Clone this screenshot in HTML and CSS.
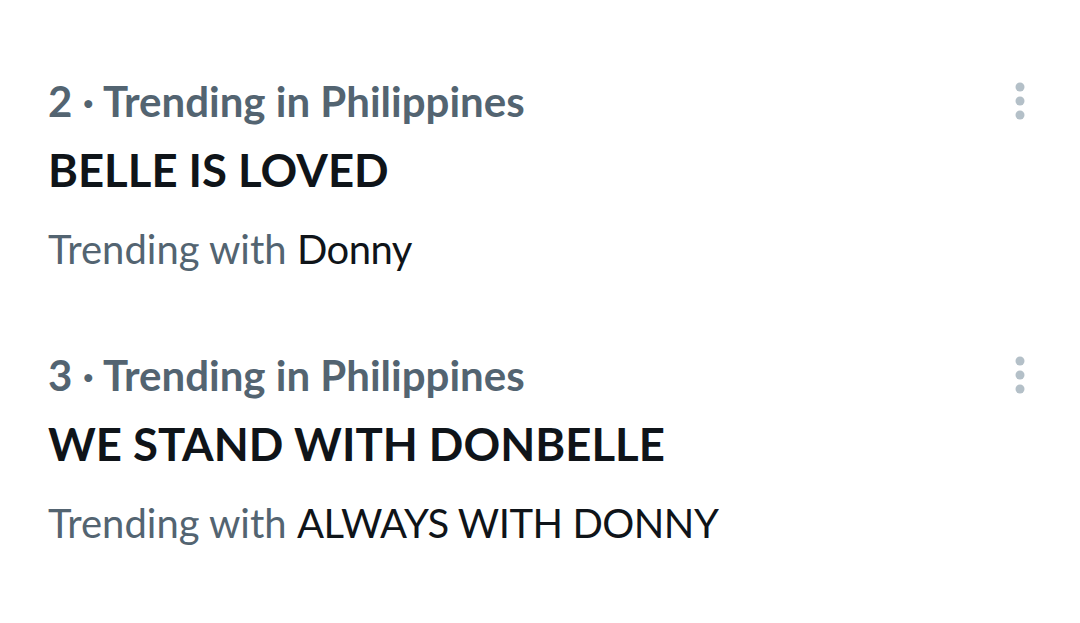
FILE: index.html
```html
<!DOCTYPE html>
<html>
<head>
<meta charset="utf-8">
<link rel="stylesheet" href="styles.css">
</head>
<body>
<div class="list">
  <div class="trend">
    <div class="info">
      <div class="meta">2 · Trending in Philippines</div>
      <div class="title">BELLE IS LOVED</div>
      <div class="with">Trending with <span class="dark">Donny</span></div>
    </div>
    <div class="more">
      <svg width="12" height="40" viewBox="0 0 12 40"><circle cx="6" cy="6" r="4.5"/><circle cx="6" cy="20" r="4.5"/><circle cx="6" cy="34" r="4.5"/></svg>
    </div>
  </div>
  <div class="trend">
    <div class="info">
      <div class="meta">3 · Trending in Philippines</div>
      <div class="title">WE STAND WITH DONBELLE</div>
      <div class="with">Trending with <span class="dark">ALWAYS WITH DONNY</span></div>
    </div>
    <div class="more">
      <svg width="12" height="40" viewBox="0 0 12 40"><circle cx="6" cy="6" r="4.5"/><circle cx="6" cy="20" r="4.5"/><circle cx="6" cy="34" r="4.5"/></svg>
    </div>
  </div>
</div>
</body>
</html>
```
FILE: styles.css
```css
html, body {
  margin: 0;
  padding: 0;
  background: #ffffff;
}
body {
  font-family: Lato, "Noto Sans", sans-serif;
  width: 1080px;
  height: 623px;
  overflow: hidden;
}
.list {
  display: flex;
  flex-direction: column;
  padding-top: 76px;
}
.trend {
  display: flex;
  justify-content: space-between;
  padding: 0 54px 0 48px;
  height: 274px;
}
.meta {
  color: #536471;
  font-weight: 700;
  font-size: 42px;
  line-height: 50px;
}
.title {
  color: #0f1419;
  font-weight: 700;
  font-size: 45.5px;
  line-height: 56px;
  margin-top: 16px;
}
.with {
  color: #536471;
  font-size: 40px;
  line-height: 52px;
  margin-top: 25px;
}
.dark {
  color: #0f1419;
  letter-spacing: -0.5px;
}
.more {
  padding-top: 5px;
}
.more svg {
  display: block;
  fill: #b4c0c8;
}
```
